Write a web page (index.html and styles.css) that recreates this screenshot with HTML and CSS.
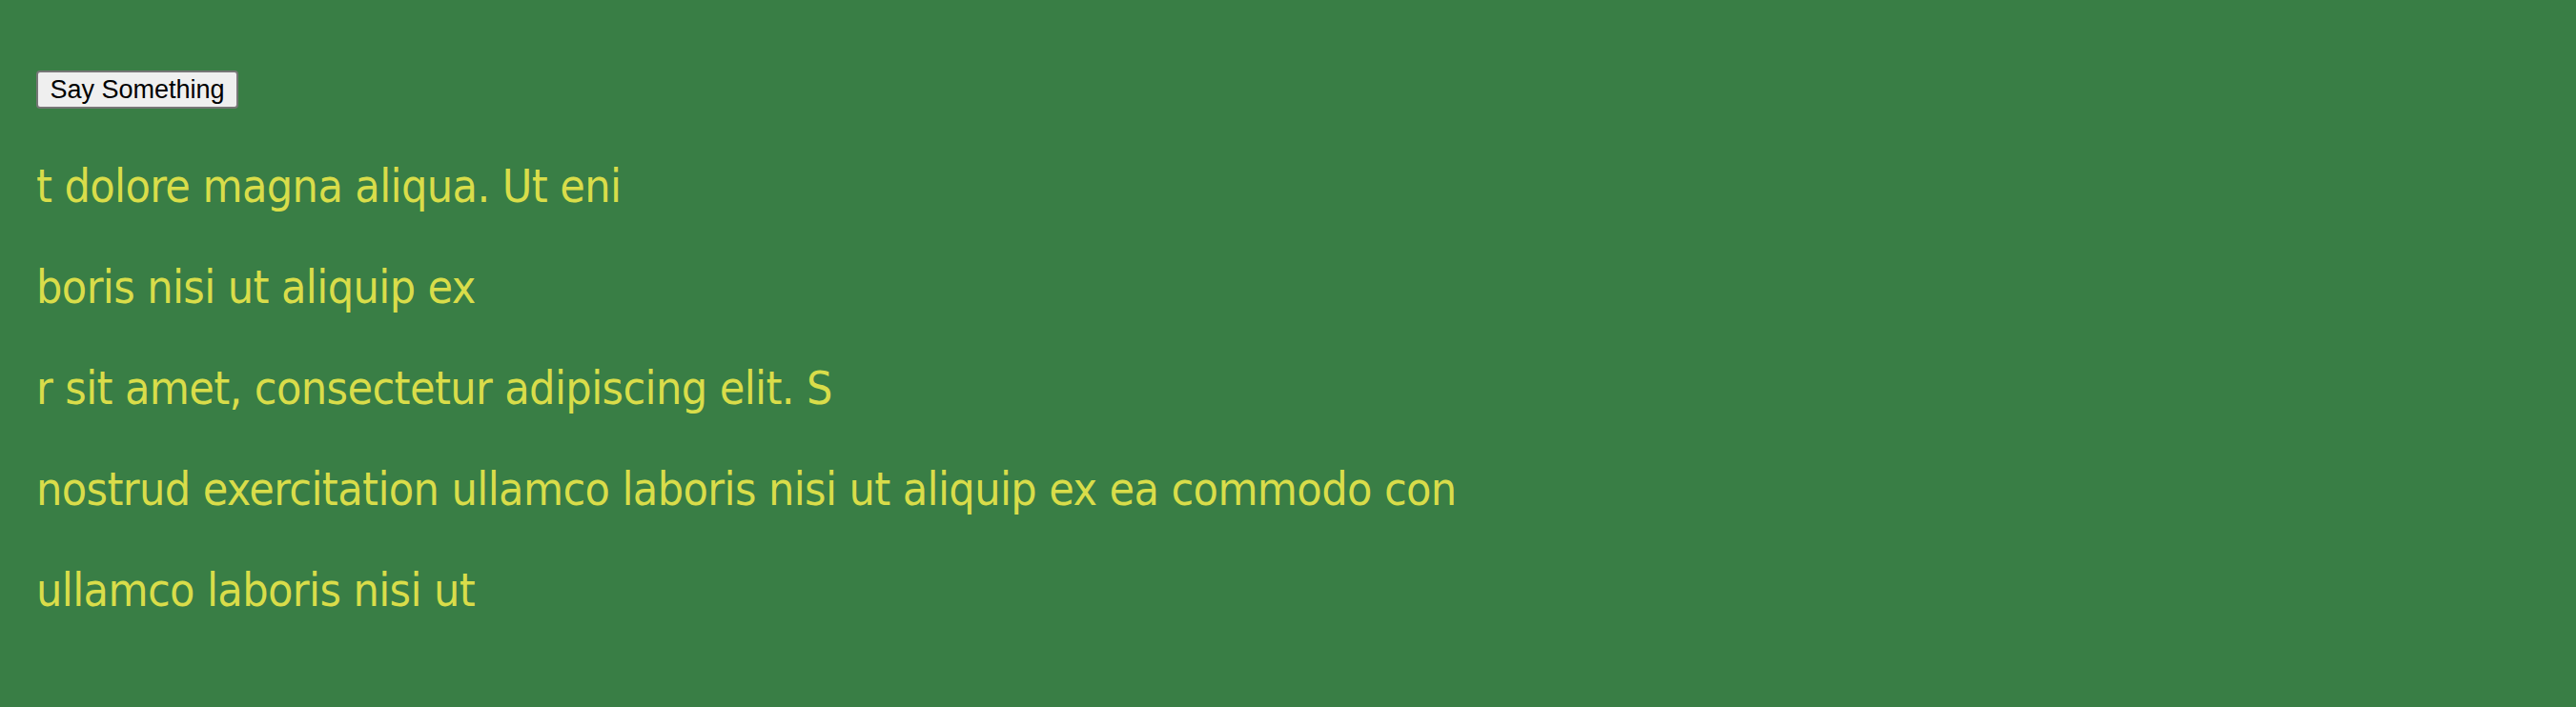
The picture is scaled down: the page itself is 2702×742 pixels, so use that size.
FILE: index.html
```html
<!DOCTYPE html>
<html lang="en">
<head>
<meta charset="utf-8">
<title>Say Something</title>
<link rel="stylesheet" href="styles.css">
</head>
<body>
<main class="page">
  <div class="toolbar">
    <button class="say-btn" type="button">Say Something</button>
  </div>
  <div class="lines">
    <p class="line">t dolore magna aliqua. Ut eni</p>
    <p class="line">boris nisi ut aliquip ex</p>
    <p class="line">r sit amet, consectetur adipiscing elit. S</p>
    <p class="line">nostrud exercitation ullamco laboris nisi ut aliquip ex ea commodo con</p>
    <p class="line">ullamco laboris nisi ut</p>
  </div>
</main>
</body>
</html>
```

FILE: styles.css
```css
html, body {
  margin: 0;
  padding: 0;
  background: #397e45;
}

.page {
  box-sizing: border-box;
  min-height: 742px;
  padding: 74px 38px 0 38px;
  display: flex;
  flex-direction: column;
  align-items: flex-start;
}

.toolbar {
  display: flex;
}

.say-btn {
  box-sizing: border-box;
  height: 40px;
  width: 212px;
  padding: 0 12px;
  border: 2px solid #767676;
  border-radius: 4px;
  background: #efefef;
  color: #000;
  font-family: "Liberation Sans", Arial, sans-serif;
  font-size: 27px;
  line-height: 1;
  display: flex;
  align-items: center;
  justify-content: center;
}

.lines {
  margin-top: 52px;
  display: flex;
  flex-direction: column;
  gap: 48px;
}

.line {
  margin: 0;
  line-height: 58px;
  font-family: "DejaVu Sans Condensed", "DejaVu Sans", sans-serif;
  font-stretch: condensed;
  font-size: 48px;
  letter-spacing: -0.6px;
  color: #d9dd4a;
  white-space: nowrap;
}
```
